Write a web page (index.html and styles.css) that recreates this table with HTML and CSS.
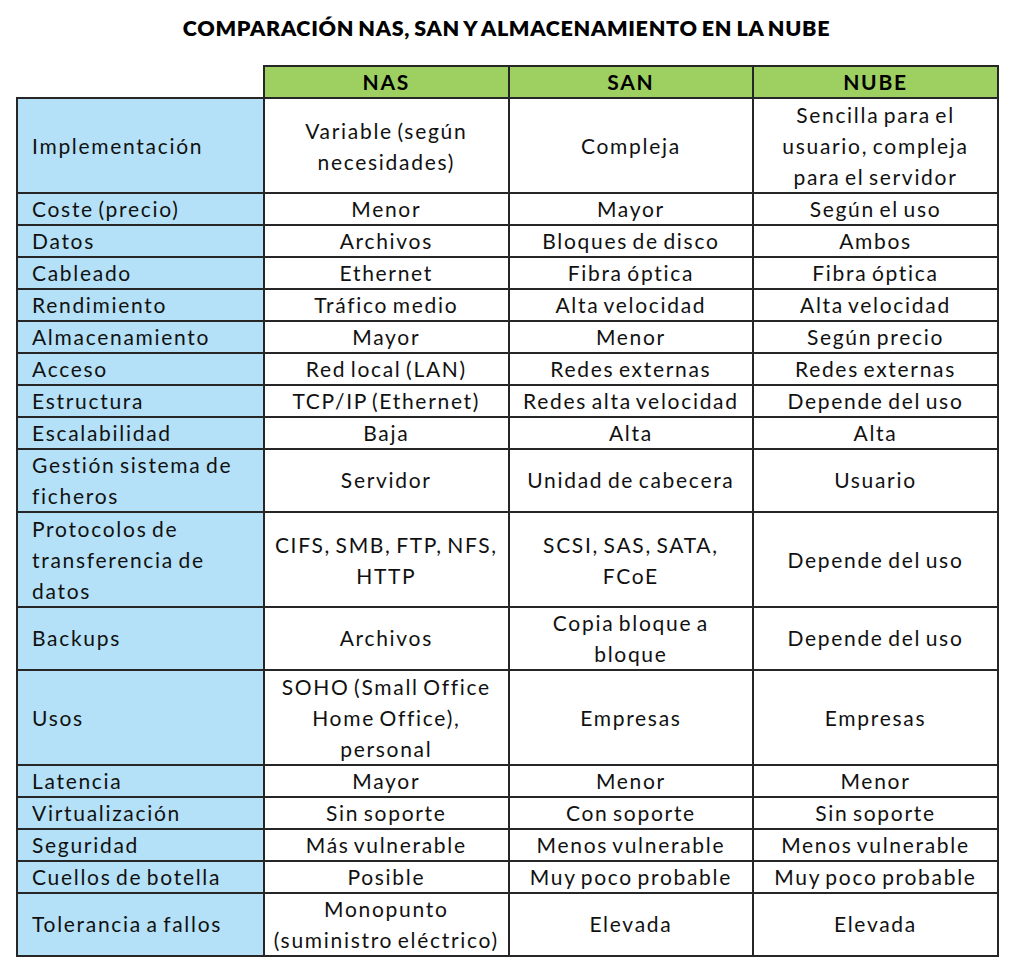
FILE: index.html
```html
<!DOCTYPE html>
<html lang="es">
<head>
<meta charset="utf-8">
<title>Comparación NAS, SAN y almacenamiento en la nube</title>
<link rel="stylesheet" href="styles.css">
</head>
<body>
<main class="page">
  <h1 class="title">COMPARACIÓN NAS, SAN Y ALMACENAMIENTO EN LA NUBE</h1>
  <table class="cmp">
    <colgroup>
      <col class="c-label"><col class="c-val"><col class="c-val"><col class="c-val">
    </colgroup>
    <thead>
      <tr class="r1">
        <th class="corner"></th>
        <th class="head">NAS</th>
        <th class="head">SAN</th>
        <th class="head">NUBE</th>
      </tr>
    </thead>
    <tbody>
      <tr class="r3 r3-short"><th class="label">Implementación</th><td>Variable (según<br>necesidades)</td><td>Compleja</td><td>Sencilla para el<br>usuario, compleja<br>para el servidor</td></tr>
      <tr class="r1"><th class="label">Coste (precio)</th><td>Menor</td><td>Mayor</td><td>Según el uso</td></tr>
      <tr class="r1"><th class="label">Datos</th><td>Archivos</td><td>Bloques de disco</td><td>Ambos</td></tr>
      <tr class="r1"><th class="label">Cableado</th><td>Ethernet</td><td>Fibra óptica</td><td>Fibra óptica</td></tr>
      <tr class="r1"><th class="label">Rendimiento</th><td>Tráfico medio</td><td>Alta velocidad</td><td>Alta velocidad</td></tr>
      <tr class="r1"><th class="label">Almacenamiento</th><td>Mayor</td><td>Menor</td><td>Según precio</td></tr>
      <tr class="r1"><th class="label">Acceso</th><td>Red local (LAN)</td><td>Redes externas</td><td>Redes externas</td></tr>
      <tr class="r1"><th class="label">Estructura</th><td>TCP/IP (Ethernet)</td><td>Redes alta velocidad</td><td>Depende del uso</td></tr>
      <tr class="r1"><th class="label">Escalabilidad</th><td>Baja</td><td>Alta</td><td>Alta</td></tr>
      <tr class="r2"><th class="label">Gestión sistema de<br>ficheros</th><td>Servidor</td><td>Unidad de cabecera</td><td>Usuario</td></tr>
      <tr class="r3"><th class="label">Protocolos de<br>transferencia de<br>datos</th><td>CIFS, SMB, FTP, NFS,<br>HTTP</td><td>SCSI, SAS, SATA,<br>FCoE</td><td>Depende del uso</td></tr>
      <tr class="r2"><th class="label">Backups</th><td>Archivos</td><td>Copia bloque a<br>bloque</td><td>Depende del uso</td></tr>
      <tr class="r3"><th class="label">Usos</th><td>SOHO (Small Office<br>Home Office),<br>personal</td><td>Empresas</td><td>Empresas</td></tr>
      <tr class="r1"><th class="label">Latencia</th><td>Mayor</td><td>Menor</td><td>Menor</td></tr>
      <tr class="r1"><th class="label">Virtualización</th><td>Sin soporte</td><td>Con soporte</td><td>Sin soporte</td></tr>
      <tr class="r1"><th class="label">Seguridad</th><td>Más vulnerable</td><td>Menos vulnerable</td><td>Menos vulnerable</td></tr>
      <tr class="r1"><th class="label">Cuellos de botella</th><td>Posible</td><td>Muy poco probable</td><td>Muy poco probable</td></tr>
      <tr class="r2 r2-short"><th class="label">Tolerancia a fallos</th><td>Monopunto<br>(suministro eléctrico)</td><td>Elevada</td><td>Elevada</td></tr>
    </tbody>
  </table>
</main>
</body>
</html>
```

FILE: styles.css
```css
html, body {
  margin: 0;
  padding: 0;
  background: #ffffff;
}

body {
  font-family: Lato, "Open Sans", sans-serif;
  color: #111111;
}

.page {
  padding: 0 0 0 16px;
  width: 981px;
}

.title {
  margin: 0;
  height: 65px;
  padding-top: 13px;
  box-sizing: border-box;
  text-align: center;
  font-size: 21.5px;
  line-height: 30px;
  font-weight: 800;
  letter-spacing: 0.7px;
  word-spacing: -1.5px;
  color: #000000;
}

.cmp {
  width: 981px;
  table-layout: fixed;
  border-collapse: collapse;
  font-size: 21px;
  line-height: 30px;
  letter-spacing: 1.7px;
  word-spacing: -2.5px;
}

.c-label { width: 247px; }
.c-val { width: 244.6px; }

.cmp th,
.cmp td {
  border: 2px solid #262626;
  padding: 0;
  vertical-align: middle;
  text-align: center;
  font-weight: 400;
}

.r1 { height: 32px; }
.r2 { height: 63px; }
.r3 { height: 95px; }
.r2-short { height: 62px; }
.r3-short { height: 94px; }

.r2 th, .r2 td { line-height: 30.5px; }
.r3 th, .r3 td { line-height: 31px; }

.cmp .corner {
  border-top: none;
  border-left: none;
  background: transparent;
}

.cmp .head {
  background: #9ecf61;
  font-weight: 700;
  color: #000000;
}

.cmp .label {
  background: #b4e1f7;
  text-align: left;
  padding-left: 14px;
}

.cmp td {
  background: #ffffff;
}
```
